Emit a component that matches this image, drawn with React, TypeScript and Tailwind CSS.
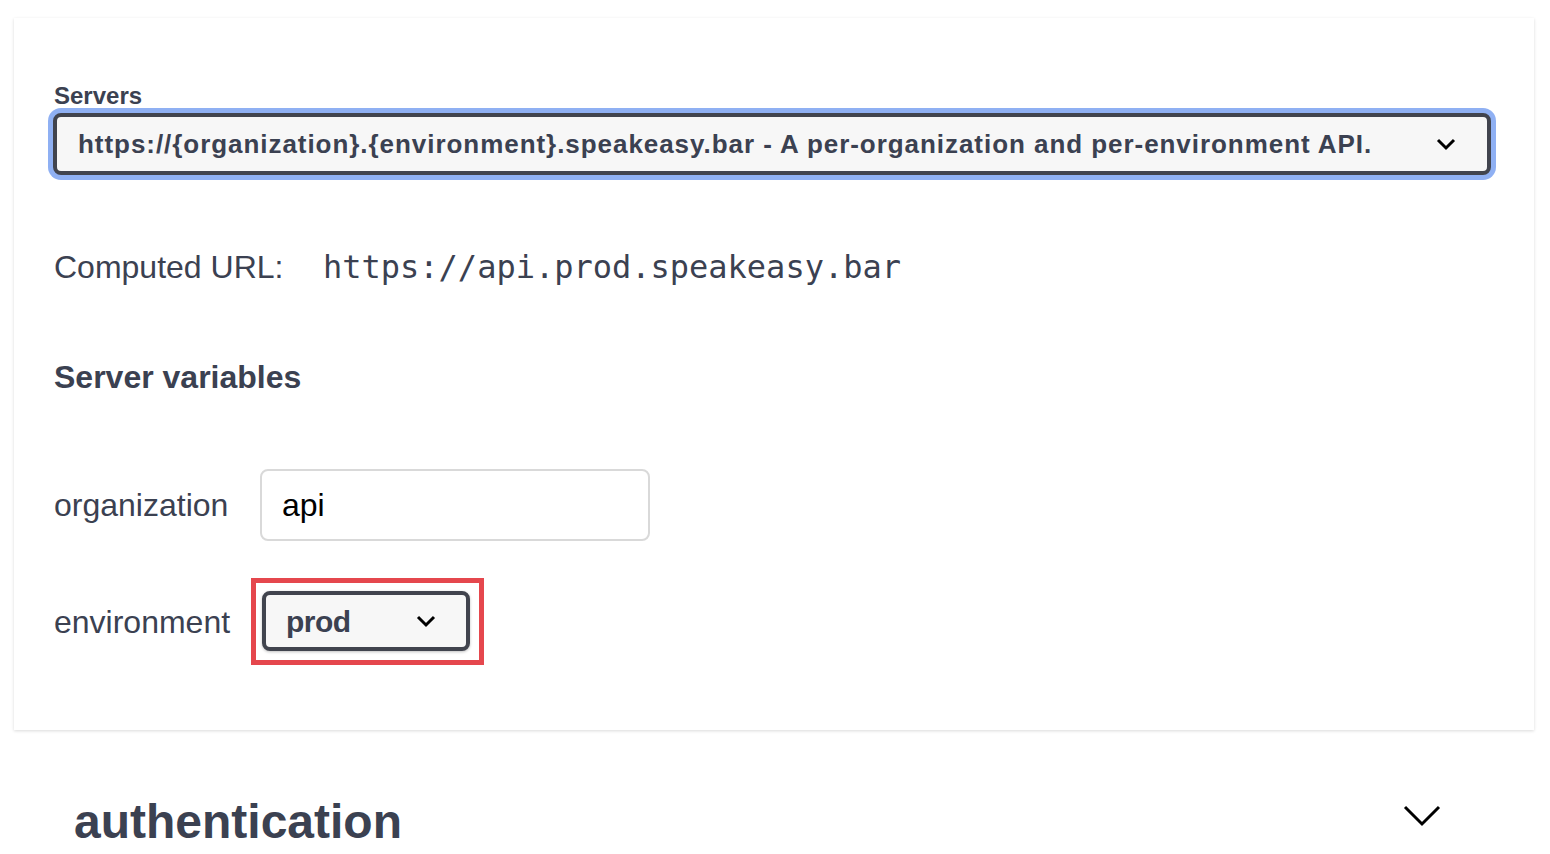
function Caret() {
  return (
    <svg width="20" height="13" viewBox="0 0 20 13">
      <path d="M2 2 L10 10 L18 2" fill="none" stroke="#000" strokeWidth="3" />
    </svg>
  );
}

export default function App() {
  const sans = "font-['Liberation_Sans',Arial,sans-serif]";
  return (
    <div className={`min-h-[854px] w-[1550px] bg-white text-[#3b4151] ${sans} overflow-hidden`}>
      {/* Servers card */}
      <div className="ml-[14px] mt-[18px] w-[1520px] h-[712px] bg-white shadow-[0_1px_3px_rgba(0,0,0,0.15)] pl-[40px] pr-[44px] pt-[66px]">
        <div className="text-[24px] leading-[24px] font-bold">Servers</div>
        <div className="mt-[5px] h-[62px] w-[1438px] -ml-px flex items-center justify-between rounded-lg border-4 border-[#41444e] bg-[#f7f7f7] ring-[5px] ring-[#8fb0f3] pl-[21px] pr-[31px]">
          <span className="text-[26px] font-bold tracking-[0.95px]">
            https://{"{organization}"}.{"{environment}"}.speakeasy.bar - A per-organization and per-environment API.
          </span>
          <Caret />
        </div>

        <div className="mt-[72px] flex items-center h-[40px] text-[32px]">
          <span className="w-[269px]">Computed URL:</span>
          <span className="font-['DejaVu_Sans_Mono',monospace]">https://api.prod.speakeasy.bar</span>
        </div>

        <div className="mt-[70px] h-[40px] flex items-center text-[32px] font-bold">Server variables</div>

        <div className="mt-[72px] flex items-center h-[72px]">
          <span className="w-[206px] text-[32px]">organization</span>
          <div className="w-[390px] h-[72px] rounded-lg border-2 border-[#d9d9d9] flex items-center pl-[20px] text-[32px] text-black">
            api
          </div>
        </div>

        <div className="mt-[37px] flex items-center h-[87px]">
          <span className="w-[197px] text-[32px]">environment</span>
          <div className="border-[5px] border-[#e5474d] pl-[6px] pr-[9px] pt-[8px] pb-[9px]">
            <div className="w-[208px] h-[60px] rounded-lg border-4 border-[#41444e] bg-[#f7f7f7] shadow-[0_1px_3px_rgba(0,0,0,0.25)] flex items-center justify-between pl-[20px] pr-[30px]">
              <span className="text-[30px] font-bold tracking-[-0.5px]">prod</span>
              <Caret />
            </div>
          </div>
        </div>
      </div>

      {/* authentication section header */}
      <div className="mt-[64px] ml-[74px] w-[1367px] flex items-center justify-between h-[56px]">
        <h4 className="text-[48px] font-bold leading-none">authentication</h4>
        <svg width="38" height="22" viewBox="0 0 38 22" className="mt-[-12px]">
          <path d="M2 2 L19 19 L36 2" fill="none" stroke="#000" strokeWidth="3" />
        </svg>
      </div>
    </div>
  );
}
